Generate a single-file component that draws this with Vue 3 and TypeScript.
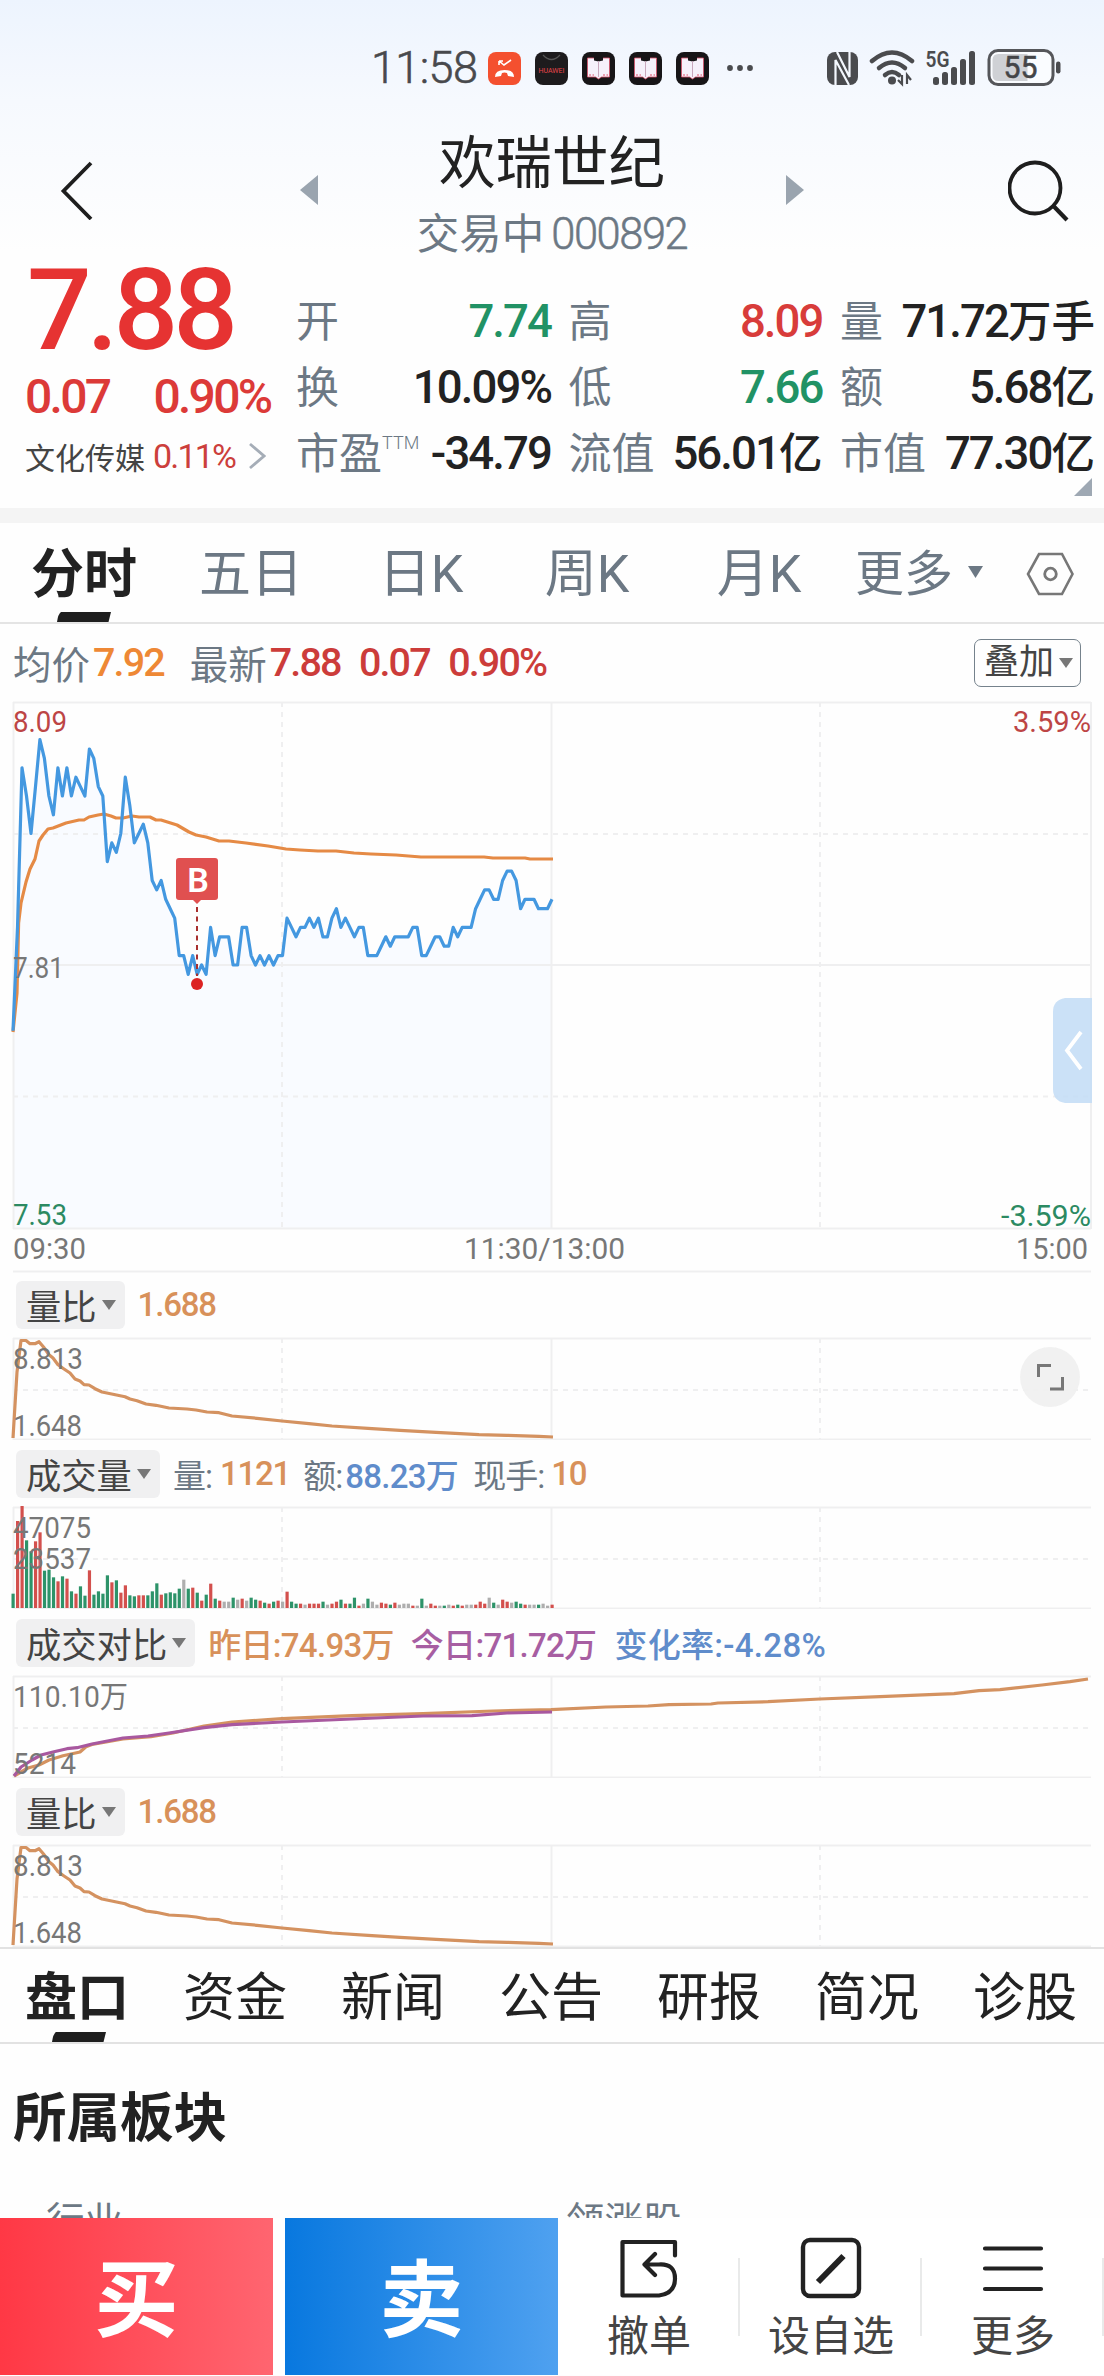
<script setup lang="ts">
interface Quote { label: string; sup?: string; value: string; unit?: string; tone: string }
interface Part { text: string; tone: string; gap?: number }
interface AxisLabel { text: string; y: number; width: number }
interface Line { points: string; tone: string }
interface Panel { name: string; parts: Part[]; labels: AxisLabel[]; lines?: Line[]; bars?: boolean; expand?: boolean }

const quotes: Quote[] = [
  { label: '开', value: '7.74', tone: 'down' },
  { label: '高', value: '8.09', tone: 'up' },
  { label: '量', value: '71.72', unit: '万手', tone: 'ink' },
  { label: '换', value: '10.09%', tone: 'ink' },
  { label: '低', value: '7.66', tone: 'down' },
  { label: '额', value: '5.68', unit: '亿', tone: 'ink' },
  { label: '市盈', sup: 'TTM', value: '-34.79', tone: 'ink' },
  { label: '流值', value: '56.01', unit: '亿', tone: 'ink' },
  { label: '市值', value: '77.30', unit: '亿', tone: 'ink' },
]

const periods = ['分时', '五日', '日K', '周K', '月K']
const sections = ['盘口', '资金', '新闻', '公告', '研报', '简况', '诊股']

// Minute geometry shared by every chart
const left = 13
const step = 1078 / 240
const minuteX = (i: number): number => left + i * step

// Distance from the previous close (7.81), in cents, one entry per minute
const cents: number[] = [
  -7, 4, 21, 18, 14, 19, 24, 22, 18, 16, 21, 18, 21, 18, 20, 19, 18, 23, 22, 19,
  18, 11, 13, 12, 14, 20, 17, 13, 14, 15, 13, 9, 8, 9, 7, 6, 5, 1, 1, -1,
  1, -1, 0, -1, 4, 1, 3, 3, 3, 0, 0, 4, 4, 1, 0, 1, 0, 1, 0, 1,
  1, 5, 4, 3, 4, 4, 5, 4, 5, 3, 3, 5, 6, 4, 5, 4, 3, 4, 4, 1,
  1, 1, 2, 3, 2, 3, 3, 3, 3, 4, 4, 1, 1, 2, 3, 3, 2, 2, 4, 3,
  4, 4, 4, 6, 7, 8, 8, 7, 7, 9, 10, 10, 9, 6, 7, 7, 7, 6, 6, 6, 7,
]
const pricePoints = cents.map((c, i) => `${minuteX(i).toFixed(1)},${(265 - c * 9.39).toFixed(1)}`).join(' ')
const areaPoints = `13,528 ${pricePoints} 552,528`
const averagePoints =
  '13,332 17,293 18.6,223 21,203 26,182 30,169 35,159 39,141 43,135 48,129 53,128 66,123 79,120 84,120 89,117 98,115 104,114 111,116 116,118 123,118 132,116 139,117 150,117 156,120 161,120 177,125 189,132 196,135 206,137 219,141 229,141 246,143 268,146 286,149 300,150 318,151 336,151 354,153 371,154 396,155 421,157 484,157 493,158 525,158 530,159 553,159'

const ratioPoints =
  '13,101 17,35 21,3.5 26,3.5 30,6.7 35,6.7 39,4.7 43.5,10 49,17.7 53,21 58,27.7 64,32 70,36 75,42 80,44 84,47.7 89,48 95,51.7 102,55 125,59.7 130,62 137,63.7 146,67 156,68.3 169,71 187,72 196,73 207,75 219,75.7 232,79 257,81.3 282,84 309,86.7 332,89 368,91.3 400,93.3 436,95.3 479,97.7 507,98.3 539,99.3 553,100'
const yesterdayPoints =
  '14,101 28,93 39,90 49,85 63,80.7 80,77 86,71.7 92,69.5 123,64 151,61.7 173,58 204,51 232,47 282,43.7 352,40.7 423,38.7 493,36 551,34.7 606,32 648,31 669,29.7 711,29 718,28 768,26.7 820,24 880,21.7 954,18.7 979,15.7 1000,14.7 1042,10 1070,6.7 1088,4'
const todayPoints =
  '14,101 21,92 32,85 41,80 53,77 67,73.7 77,72.7 92,69 123,63 148,61 169,58 204,52.7 232,49.7 282,47 352,44 423,41 472,40.7 507,38 552,37'

// r = rising, g = falling, n = unchanged; the number is the bar height in thirds of a pixel
const volumes = (
  'g43 r261 r307 g203 g170 r200 r227 g112 g115 g92 r80 g95 r88 g50 r43 g65 g37 r113 g40 g50 ' +
  'g43 g98 r77 g83 r46 r68 g38 g35 r38 r38 g38 g50 g74 r40 g44 g47 g44 g58 n85 g58 ' +
  'r61 g46 r22 g40 r73 g28 r22 n19 n19 g31 n25 r28 n22 g31 g25 r22 g16 r13 g19 r22 ' +
  'n19 r49 g19 g13 r13 n10 r13 r13 r13 g19 n10 r13 r19 g25 r13 g13 g31 r7 n13 g28 ' +
  'n19 n10 r16 r13 g10 r16 n10 n13 n13 r7 n7 g28 n7 r13 r7 n7 g7 n10 r7 g10 ' +
  'r7 n10 n10 r10 r19 r13 n31 g16 n10 r25 r19 n16 g19 g13 r10 n10 n10 g10 n13 n7 r10'
).split(' ').map((s, i) => ({ kind: s[0], h: Number(s.slice(1)) / 3, x: minuteX(i) - 1.5 }))

const ratioPanel = (expand: boolean): Panel => ({
  name: '量比',
  parts: [{ text: '1.688', tone: 'amber num' }],
  labels: [{ text: '8.813', y: 32, width: 70 }, { text: '1.648', y: 99, width: 69 }],
  lines: [{ points: ratioPoints, tone: 'l-amber' }],
  expand,
})
const panels: Panel[] = [
  ratioPanel(true),
  {
    name: '成交量',
    parts: [
      { text: '量:', tone: 'slate' }, { text: '1121', tone: 'amber num', gap: 8 },
      { text: '额:', tone: 'slate', gap: 13 }, { text: '88.23万', tone: 'blue', gap: 3 },
      { text: '现手:', tone: 'slate', gap: 15 }, { text: '10', tone: 'amber num', gap: 7 },
    ],
    labels: [{ text: '47075', y: 32, width: 78 }, { text: '23537', y: 63, width: 78 }],
    bars: true,
  },
  {
    name: '成交对比',
    parts: [
      { text: '昨日:74.93万', tone: 'amber' },
      { text: '今日:71.72万', tone: 'violet', gap: 17 },
      { text: '变化率:-4.28%', tone: 'blue wide', gap: 18 },
    ],
    labels: [{ text: '110.10万', y: 32, width: 115 }, { text: '5214', y: 99, width: 63 }],
    lines: [{ points: yesterdayPoints, tone: 'l-amber' }, { points: todayPoints, tone: 'l-violet' }],
  },
  ratioPanel(false),
]
</script>

<template>
  <div class="screen">
    <header class="top">
      <div class="status">
        <span class="clock">11:58</span>
        <svg class="notes" width="280" height="40" viewBox="0 0 280 40">
          <rect x="1" y="4" width="33" height="33" rx="8" fill="#f4502f" />
          <path d="M12 13 l5 4 7-5 M12 13v4 M12 13h4" fill="none" stroke="#fff" stroke-width="1.6" />
          <path d="M8 29 q0-7 9.500-7 t9.500 7 l-6-1 -1-3 q-2.500-1-5 0 l-1 3z" fill="#fff" />
          <rect x="48" y="4" width="33" height="33" rx="8" fill="#1d1b1d" />
          <path d="M56 7 q8.500 9 17 0" fill="none" stroke="#555" stroke-width="1.300" />
          <text x="51.500" y="25" font-size="7" textLength="26" lengthAdjust="spacingAndGlyphs" fill="#e8454a">HUAWEI</text>
          <g v-for="n in 3" :key="n" :transform="`translate(${48 + n * 47} 4)`">
            <rect width="33" height="33" rx="8" fill="#171517" />
            <path d="M5.500 6h6l5 2.500L21.500 6h6v19h-8l-3 2-3-2h-8z" fill="#f6f1fb" stroke="#d8506a" stroke-width=".8" />
            <path d="M12 5.500v3l4.500 1 4.500-1v-3z" fill="#171517" />
            <path d="M16.500 9v16" stroke="#c9a8bd" />
            <path d="M7 23h5M21 23h5" stroke="#e0526a" stroke-width="1.200" stroke-dasharray="2 1.500" />
          </g>
          <g fill="#4a4b4e"><circle cx="243" cy="20" r="2.900" /><circle cx="253" cy="20" r="2.900" /><circle cx="263" cy="20" r="2.900" /></g>
        </svg>
        <svg class="signals" width="240" height="44" viewBox="0 0 240 44">
          <rect x="3" y="6" width="31" height="33" rx="8" fill="#4a4b4e" />
          <path d="M11.500 40V14L25 39M13 6L25.500 31V5" fill="none" stroke="#f3f7fd" stroke-width="2.200" />
          <g fill="none" stroke="#4a4b4e" stroke-width="4.500" stroke-linecap="round">
            <path d="M48 15q20-17 40 0" /><path d="M55 22q13-11 26 0" /><path d="M61 29q7-6 14 0" />
          </g>
          <circle cx="68" cy="34.500" r="4" fill="#4a4b4e" />
          <path d="M78 29v9l-4-4M83 38v-9l4 5" fill="none" stroke="#4a4b4e" stroke-width="2.200" />
          <text x="101.500" y="21" font-size="22" font-weight="600" textLength="24" lengthAdjust="spacingAndGlyphs" fill="#4a4b4e">5G</text>
          <g fill="#4a4b4e">
            <rect x="109" y="31" width="6" height="8" rx="2.500" /><rect x="118" y="26" width="6" height="13" rx="2.500" /><rect x="127" y="21" width="6" height="18" rx="2.500" />
            <rect x="136" y="13" width="6" height="26" rx="2.500" /><rect x="145" y="5" width="6" height="34" rx="2.500" />
          </g>
          <rect x="165" y="4.500" width="64" height="34" rx="9" fill="#fafcff" stroke="#55565a" stroke-width="3" />
          <path d="M174.500 8h29v27h-29q-6 0-6-6V14q0-6 6-6z" fill="#cfd1d5" />
          <text x="179.500" y="32" font-size="31" font-weight="400" textLength="34" lengthAdjust="spacingAndGlyphs" fill="#444548" stroke="#444548" stroke-width=".5">55</text>
          <rect x="232" y="15.500" width="4.500" height="12" rx="2.200" fill="#4a4b4e" />
        </svg>
      </div>
      <div class="titlebar">
        <svg class="back" width="36" height="60" viewBox="0 0 36 60"><path d="M33 3L5.500 31L33 59" fill="none" stroke="#1e1e1e" stroke-width="3.800" /></svg>
        <svg class="prev" width="18" height="30" viewBox="0 0 18 30"><path d="M18 0v30L0 15z" fill="#9aa4af" /></svg>
        <div class="names">
          <div class="name">欢瑞世纪</div>
          <div class="code">交易中<span>000892</span></div>
        </div>
        <svg width="18" height="30" viewBox="0 0 18 30"><path d="M0 0v30l18-15z" fill="#9aa4af" /></svg>
        <svg class="search" width="64" height="64" viewBox="0 0 64 64"><circle cx="27" cy="30" r="25.500" fill="none" stroke="#1e1e1e" stroke-width="3.800" /><path d="M45 47.500L59 62" stroke="#1e1e1e" stroke-width="4.200" /></svg>
      </div>
    </header>

    <section class="quote">
      <div class="price">
        <div class="last">7.88</div>
        <div class="change"><span>0.07</span><span>0.90%</span></div>
        <div class="industry">
          <span>文化传媒</span><em>0.11%</em>
          <svg width="18" height="28" viewBox="0 0 18 28"><path d="M2 2l14 12L2 26" fill="none" stroke="#a5adb7" stroke-width="2.800" /></svg>
        </div>
      </div>
      <div class="stats">
        <div v-for="q in quotes" :key="q.label" class="stat">
          <span class="k">{{ q.label }}<sup v-if="q.sup">{{ q.sup }}</sup></span>
          <span class="v" :class="q.tone">{{ q.value }}<i v-if="q.unit">{{ q.unit }}</i></span>
        </div>
      </div>
      <svg class="corner" width="18" height="18" viewBox="0 0 18 18"><path d="M18 0v18H0z" fill="#9ea8b3" /></svg>
    </section>

    <div class="band"></div>

    <nav class="periods">
      <div v-for="(p, i) in periods" :key="p" class="period" :class="{ on: i === 0 }">
        {{ p }}
        <svg v-if="i === 0" class="mark" width="54" height="10" viewBox="0 0 54 10"><path d="M4 0h50l-2.500 10H0q1-8 4-10z" fill="#1e1e1e" /></svg>
      </div>
      <div class="period more">更多<svg width="15" height="12" viewBox="0 0 15 12"><path d="M0 0h15L7.500 12z" fill="#6c7884" /></svg></div>
      <div class="period gear"><svg width="48" height="46" viewBox="0 0 48 46"><path d="M13 3h23l10.500 20L36 43H13L2 23z" fill="none" stroke="#777" stroke-width="2.600" /><circle cx="24.500" cy="23" r="5.800" fill="none" stroke="#777" stroke-width="2.800" /></svg></div>
    </nav>

    <div class="legend">
      <span class="slate">均价</span><b class="orange">7.92</b>
      <span class="slate newest">最新</span><b class="red">7.88</b><b class="red gap">0.07</b><b class="red gap">0.90%</b>
      <div class="overlay">叠加<svg width="14" height="10" viewBox="0 0 14 10"><path d="M0 0h14L7 10z" fill="#777" /></svg></div>
    </div>

    <svg class="main" width="1104" height="573" viewBox="0 0 1104 573">
      <polygon :points="areaPoints" fill="#f9fbff" />
      <g stroke="#efeff0" stroke-width="2" fill="none">
        <path d="M13 2.500H1091M13 265H1091M13 528.500H1091M13.500 2V529M551.500 2V529M1091 2V529M13 571.500H1091" />
        <path d="M13 134H1091M13 396.500H1091M282 2V529M820 2V529" stroke-dasharray="5 5" />
      </g>
      <polyline :points="averagePoints" fill="none" stroke="#e58a45" stroke-width="3.200" stroke-linejoin="round" />
      <polyline :points="pricePoints" fill="none" stroke="#4498e0" stroke-width="3.200" stroke-linejoin="round" />
      <g class="axis">
        <text x="13" y="32" textLength="54" lengthAdjust="spacingAndGlyphs" fill="#bd4545">8.09</text>
        <text x="13" y="278" textLength="51" lengthAdjust="spacingAndGlyphs">7.81</text>
        <text x="13" y="525" textLength="54" lengthAdjust="spacingAndGlyphs" fill="#2c8a62">7.53</text>
        <text x="1013" y="32" textLength="78" lengthAdjust="spacingAndGlyphs" fill="#bd4545">3.59%</text>
        <text x="1001" y="525.500" textLength="90" lengthAdjust="spacingAndGlyphs" fill="#2c8a62">-3.59%</text>
        <text x="13" y="559" textLength="73" lengthAdjust="spacingAndGlyphs">09:30</text>
        <text x="464" y="559" textLength="161" lengthAdjust="spacingAndGlyphs">11:30/13:00</text>
        <text x="1016" y="559" textLength="72" lengthAdjust="spacingAndGlyphs">15:00</text>
      </g>
      <path d="M197 207V276" stroke="#a8302f" stroke-width="2" stroke-dasharray="5 4.500" />
      <rect x="176" y="158" width="42" height="42" rx="3" fill="#e05050" />
      <path d="M193 200h8l-4 4z" fill="#e05050" />
      <text x="198" y="191.500" text-anchor="middle" font-size="34" font-weight="600" fill="#fff">B</text>
      <circle cx="197" cy="284" r="6" fill="#dc2323" />
      <path d="M1092 298h-27q-12 2-12 14v77q0 12 12 14h27z" fill="#c2dcf6" fill-opacity=".85" />
      <path d="M1081 332l-14 18.500 14 18.500" fill="none" stroke="#fff" stroke-width="3.800" />
    </svg>

    <section v-for="(p, n) in panels" :key="n" class="panel">
      <div class="panel-head">
        <div class="chip">{{ p.name }}<svg width="14" height="10" viewBox="0 0 14 10"><path d="M0 0h14L7 10z" fill="#777" /></svg></div>
        <span v-for="t in p.parts" :key="t.text" :class="t.tone" :style="{ marginLeft: (t.gap ?? 0) + 'px' }">{{ t.text }}</span>
      </div>
      <svg width="1104" height="103" viewBox="0 0 1104 103">
        <g stroke="#efeff0" stroke-width="2" fill="none">
          <path d="M13 1.500H1091M13 102.500H1091M13.500 1V103M551.500 1V103" />
          <path d="M13 53H1091M282 1V103M820 1V103" stroke-dasharray="5 5" />
        </g>
        <g v-if="p.bars">
          <rect v-for="(b, i) in volumes" :key="i" :x="b.x" :y="102 - b.h" width="3.200" :height="b.h" :class="'bar-' + b.kind" />
        </g>
        <polyline v-for="l in p.lines" :key="l.tone" :points="l.points" :class="l.tone" />
        <g class="axis">
          <text v-for="a in p.labels" :key="a.text" x="13" :y="a.y" :textLength="a.width" lengthAdjust="spacingAndGlyphs">{{ a.text }}</text>
        </g>
        <g v-if="p.expand">
          <circle cx="1050" cy="40" r="30" fill="#f0f0f0" fill-opacity=".9" />
          <path d="M1038.500 40V28.500H1051M1050 52H1062.500V40" fill="none" stroke="#777" stroke-width="3" />
        </g>
      </svg>
    </section>

    <nav class="sections">
      <div v-for="(s, i) in sections" :key="s" :class="{ on: i === 0 }">
        {{ s }}
        <svg v-if="i === 0" class="mark" width="54" height="10" viewBox="0 0 54 10"><path d="M4 0h50l-2.500 10H0q1-8 4-10z" fill="#1e1e1e" /></svg>
      </div>
    </nav>

    <section class="boards">
      <h2>所属板块</h2>
      <div class="cols"><span>行业</span><span>领涨股</span></div>
    </section>

    <footer class="actions">
      <button class="buy">买</button>
      <button class="sell">卖</button>
      <div class="act">
        <svg width="62" height="62" viewBox="0 0 62 62"><path d="M57 18.500V5H4.500v53.500H41q16-2 16-17T41 27.500H27M37 17L26.500 27.500 37 38" fill="none" stroke="#222" stroke-width="4.200" stroke-linejoin="round" stroke-linecap="round" /></svg>
        撤单
      </div>
      <div class="act">
        <svg width="62" height="62" viewBox="0 0 62 62"><rect x="3" y="3" width="56" height="56" rx="7" fill="none" stroke="#222" stroke-width="4.400" /><path d="M43.500 19L18 45" stroke="#222" stroke-width="6" /></svg>
        设自选
      </div>
      <div class="act">
        <svg width="62" height="62" viewBox="0 0 62 62"><path d="M3 11.500H59M3 31.500H59M3 52H59" stroke="#222" stroke-width="4.200" stroke-linecap="round" /></svg>
        更多
      </div>
    </footer>
  </div>
</template>

<style>
body { background: #fff; }
</style>

<style scoped>
.screen {
  width: 1104px;
  height: 2376px;
  overflow: hidden;
  display: flex;
  flex-direction: column;
  background: #fefefe;
  color: #222;
  font-family: Roboto, "Noto Sans CJK SC", sans-serif;
}
.screen > * { flex-shrink: 0; }
svg { display: block; flex-shrink: 0; }

.top { height: 252px; background: linear-gradient(#edf4fe, #f6f9fe 40%, #fefefe); }
.status { display: flex; align-items: center; height: 136px; box-sizing: border-box; padding-left: 371px; }
.clock { width: 116px; font-size: 45px; line-height: 50px; color: #48494c; letter-spacing: -0.6px; font-weight: 300; -webkit-text-stroke: 0.6px #48494c; }
.signals { margin-left: 57px; }
.titlebar { display: flex; align-items: center; height: 108px; padding: 0 32px 0 58px; }
.prev { margin-left: 206px; }
.names { flex: 1; padding-top: 14px; text-align: center; white-space: nowrap; }
.name { font-size: 56.500px; line-height: 68px; }
.code { margin-top: 7px; font-size: 42.500px; line-height: 60px; color: #6c7884; }
.code span { margin-left: 7px; font-size: 43.500px; letter-spacing: -1.500px; font-weight: 300; -webkit-text-stroke: 0.5px #6c7884; }
.search { margin-left: 204px; }

.quote { position: relative; display: flex; height: 256px; }
.price { width: 297px; box-sizing: border-box; padding: 3px 0 0 25px; color: #dc3a38; white-space: nowrap; }
.last { margin-left: 2px; font-size: 114px; line-height: 110px; font-weight: 500; letter-spacing: -5px; color: #e63332; }
.change { display: flex; margin-top: 3px; font-size: 48px; line-height: 58px; font-weight: 500; letter-spacing: -2.700px; }
.change span + span { margin-left: 44px; }
.industry { display: flex; align-items: center; margin-top: 8px; height: 44px; font-size: 30px; color: #444; }
.industry em { margin-left: 8px; font-style: normal; font-size: 34px; letter-spacing: -1.800px; color: #cc3f3c; }
.industry svg { margin-left: 13px; }
.stats { flex: 1; display: grid; grid-template-columns: 253px 252px 253px; column-gap: 19.500px; grid-auto-rows: 66px; padding-top: 37px; }
.stat { display: flex; justify-content: space-between; line-height: 66px; white-space: nowrap; }
.k { font-size: 43px; color: #6c7884; margin-left: -1px; }
.k sup { display: inline-block; font-size: 18px; line-height: 18px; vertical-align: 20px; font-weight: 300; letter-spacing: 0; }
.v { font-size: 45.500px; font-weight: 500; letter-spacing: -1.900px; margin-right: -1px; }
.v i { font-style: normal; font-size: 43.500px; letter-spacing: 0; }
.up { color: #d83c3a; }
.down { color: #219265; }
.ink { color: #222; }
.corner { position: absolute; right: 12px; bottom: 12px; }

.band { height: 15px; background: #f4f4f4; }
.periods {
  display: grid;
  grid-template-columns: 168px 166px 174px 158px 186px 134px 118px;
  grid-template-rows: 99px;
  height: 99px;
  border-bottom: 2px solid #e4e4e4;
}
.period { position: relative; display: flex; align-items: center; justify-content: center; font-size: 52px; line-height: 80px; color: #6c7884; padding-top: 5px; box-sizing: border-box; }
.period.on { font-size: 53px; }
.on { color: #222; font-weight: 700; }
.more { gap: 15px; font-size: 49px; }
.more svg { margin-bottom: 7px; }
.gear { padding: 2px 0 0 10px; }
.mark { position: absolute; bottom: 0; left: 57px; }

.legend { display: flex; align-items: center; height: 76px; padding: 0 23px 0 13px; font-size: 38.500px; }
.legend b { font-size: 39.500px; font-weight: 500; letter-spacing: -1.900px; margin-left: 3px; }
.legend .newest { margin-left: 26px; }
.legend .gap { margin-left: 18.500px; }
.slate { color: #6c7884; }
.orange { color: #ee8835; }
.red { color: #cc3c3a; }
.overlay { display: flex; align-items: center; gap: 5px; margin-left: auto; margin-top: 2px; height: 46px; padding: 0 7px 0 9px; border: 1.500px solid #75828c; border-radius: 7px; font-size: 35px; color: #444; line-height: 46px; }

.axis { font-size: 30px; fill: #777; }
.panel { height: 169px; }
.main { margin-bottom: -2px; }
.panel-head { display: flex; align-items: center; height: 66px; padding: 1px 0 0 16px; box-sizing: border-box; font-size: 33px; font-weight: 500; letter-spacing: -0.700px; white-space: nowrap; }
.panel-head .slate { font-weight: 400; letter-spacing: -1px; }
.panel-head .num { letter-spacing: -1.200px; }
.panel-head .wide { letter-spacing: 0.300px; }
.chip { display: flex; align-items: center; gap: 5px; height: 48px; padding: 0 9px 0 10px; margin-right: 13px; border-radius: 6px; background: #f0f0f1; font-size: 35.300px; font-weight: 400; letter-spacing: 0; color: #444; }
.amber { color: #d8915a; }
.blue { color: #5f8ccb; }
.violet { color: #a75ea2; }
.l-amber, .l-violet { fill: none; stroke: #d49260; stroke-width: 3.200; stroke-linejoin: round; }
.l-violet { stroke: #a8589f; }
.bar-r { fill: #d3504d; }
.bar-g { fill: #2d9369; }
.bar-n { fill: #aeaeae; }

.sections { display: grid; grid-template-columns: repeat(7, 158px); grid-template-rows: 93px; height: 93px; margin-left: -2px; border-top: 2px solid #e2e2e2; border-bottom: 2px solid #e2e2e2; font-size: 52px; line-height: 100px; text-align: center; }
.sections div { position: relative; height: 93px; }
.sections .mark { left: 54px; }

.boards { height: 174px; overflow: hidden; }
h2 { margin: 35px 0 0 13px; font-size: 53.500px; line-height: 80px; font-weight: 700; }
.cols { display: flex; margin-top: 35px; font-size: 38.500px; line-height: 56px; color: #6c7884; }
.cols span { width: 520px; padding-left: 46px; box-sizing: border-box; }

.actions { display: flex; height: 157px; background: #fff; }
button { width: 273px; border: 0; padding: 10px 0 0; color: #fff; font: 700 84px/147px Roboto, "Noto Sans CJK SC", sans-serif; }
.buy { background: linear-gradient(90deg, #ff3845, #ff6570); }
.sell { margin: 0 0 0 12px; background: linear-gradient(90deg, #0878df, #4fa1f0); }
.act { position: relative; flex: 1; display: flex; flex-direction: column; align-items: center; padding-top: 19px; font-size: 42px; line-height: 56px; color: #444; white-space: nowrap; }
.act svg { margin-bottom: 10px; }
.act::after { content: ""; position: absolute; right: 0; top: 40px; width: 2.500px; height: 78px; background: #e9eaea; }
</style>
